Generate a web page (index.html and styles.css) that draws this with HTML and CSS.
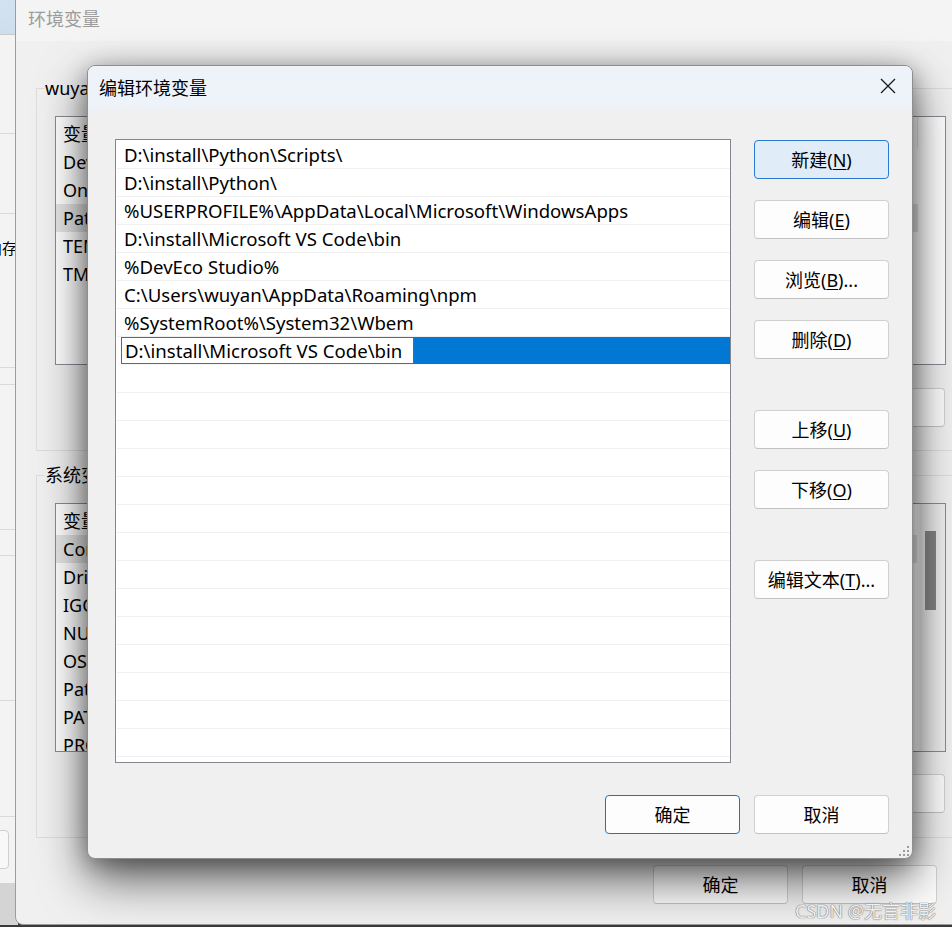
FILE: index.html
```html
<!DOCTYPE html>
<html lang="zh-CN">
<head>
<meta charset="utf-8">
<title>编辑环境变量</title>
<link rel="stylesheet" href="styles.css">
</head>
<body>
<div class="desktop">

  <section class="win far">
    <div class="far-top"></div>
    <div class="far-sec h98"></div>
    <div class="far-sec h79"></div>
    <div class="far-sec h153"><span class="far-label">内存</span></div>
    <div class="far-sec h16"></div>
    <div class="far-sec h144"></div>
    <div class="far-sec h25"></div>
    <div class="far-sec h144"></div>
    <div class="far-sec h115"></div>
    <div class="far-foot"><span class="far-btn"></span></div>
    <div class="far-rest"></div>
  </section>

  <section class="win env">
    <header class="env-title">环境变量</header>
    <div class="env-body">
      <div class="group g-user">
        <span class="group-label">wuyan 的用户变量(<u>U</u>)</span>
        <div class="lv">
          <div class="lv-main">
            <div class="lv-head"><span class="col-name">变量</span><span class="col-val">值</span></div>
            <div class="lv-row"><span class="col-name">DevEco Studio</span><span class="col-val">D:\install\DevEco Studio\bin;</span></div>
            <div class="lv-row"><span class="col-name">OneDrive</span><span class="col-val">C:\Users\wuyan\OneDrive</span></div>
            <div class="lv-row sel"><span class="col-name">Path</span><span class="col-val">D:\install\Python\Scripts\;D:\install\Python\;...</span></div>
            <div class="lv-row"><span class="col-name">TEMP</span><span class="col-val">%USERPROFILE%\AppData\Local\Temp</span></div>
            <div class="lv-row"><span class="col-name">TMP</span><span class="col-val">%USERPROFILE%\AppData\Local\Temp</span></div>
          </div>
        </div>
        <div class="btn-row">
          <button class="btn">新建(<u>N</u>)...</button>
          <button class="btn">编辑(<u>E</u>)...</button>
          <button class="btn">删除(<u>D</u>)</button>
        </div>
      </div>

      <div class="group g-sys">
        <span class="group-label">系统变量(<u>S</u>)</span>
        <div class="lv">
          <div class="lv-main">
            <div class="lv-head"><span class="col-name">变量</span><span class="col-val">值</span></div>
            <div class="lv-row sel"><span class="col-name">ComSpec</span><span class="col-val">C:\Windows\system32\cmd.exe</span></div>
            <div class="lv-row"><span class="col-name">DriverData</span><span class="col-val">C:\Windows\System32\Drivers\DriverData</span></div>
            <div class="lv-row"><span class="col-name">IGCCSVC_DB</span><span class="col-val">AQAAANCMnd8BFdERjHoAwE...</span></div>
            <div class="lv-row"><span class="col-name">NUMBER_OF_PROCESSORS</span><span class="col-val">16</span></div>
            <div class="lv-row"><span class="col-name">OS</span><span class="col-val">Windows_NT</span></div>
            <div class="lv-row"><span class="col-name">Path</span><span class="col-val">C:\Windows\system32;C:\Windows;...</span></div>
            <div class="lv-row"><span class="col-name">PATHEXT</span><span class="col-val">.COM;.EXE;.BAT;.CMD;.VBS;.VBE;.JS</span></div>
            <div class="lv-row"><span class="col-name">PROCESSOR_ARCHITECTURE</span><span class="col-val">AMD64</span></div>
          </div>
          <div class="vscroll"><span class="vthumb"></span></div>
        </div>
        <div class="btn-row">
          <button class="btn">新建(<u>W</u>)...</button>
          <button class="btn">编辑(<u>I</u>)...</button>
          <button class="btn">删除(<u>L</u>)</button>
        </div>
      </div>

      <div class="env-foot">
        <button class="btn">确定</button>
        <button class="btn">取消</button>
      </div>
    </div>
  </section>

  <section class="win dlg">
    <header class="dlg-title">
      <span class="dlg-caption">编辑环境变量</span>
      <span class="dlg-close">
        <svg width="16" height="16" viewBox="0 0 16 16" aria-hidden="true"><path d="M1 1 L15 15 M15 1 L1 15" stroke="#1a1a1a" stroke-width="1.3" fill="none"/></svg>
      </span>
    </header>
    <div class="dlg-body">
      <div class="dlg-main">
        <div class="plist">
          <div class="prow"><span class="ptext">D:\install\Python\Scripts\</span></div>
          <div class="prow"><span class="ptext">D:\install\Python\</span></div>
          <div class="prow"><span class="ptext">%USERPROFILE%\AppData\Local\Microsoft\WindowsApps</span></div>
          <div class="prow"><span class="ptext">D:\install\Microsoft VS Code\bin</span></div>
          <div class="prow"><span class="ptext">%DevEco Studio%</span></div>
          <div class="prow"><span class="ptext">C:\Users\wuyan\AppData\Roaming\npm</span></div>
          <div class="prow"><span class="ptext">%SystemRoot%\System32\Wbem</span></div>
          <div class="prow editing"><span class="pedit">D:\install\Microsoft VS Code\bin</span><span class="pfill"></span></div>
          <div class="prow"></div><div class="prow"></div><div class="prow"></div><div class="prow"></div>
          <div class="prow"></div><div class="prow"></div><div class="prow"></div><div class="prow"></div>
          <div class="prow"></div><div class="prow"></div><div class="prow"></div><div class="prow"></div>
          <div class="prow"></div><div class="prow"></div>
        </div>
        <div class="side">
          <button class="btn default">新建(<u>N</u>)</button>
          <button class="btn">编辑(<u>E</u>)</button>
          <button class="btn">浏览(<u>B</u>)...</button>
          <button class="btn">删除(<u>D</u>)</button>
          <button class="btn gap">上移(<u>U</u>)</button>
          <button class="btn">下移(<u>O</u>)</button>
          <button class="btn gap">编辑文本(<u>T</u>)...</button>
        </div>
      </div>
      <div class="dlg-foot">
        <button class="btn primary">确定</button>
        <button class="btn">取消</button>
      </div>
    </div>
    <svg class="grip" width="10" height="10" viewBox="0 0 10 10" aria-hidden="true">
      <rect x="8" y="0" width="2" height="2" fill="#9d9d9d"/>
      <rect x="4" y="4" width="2" height="2" fill="#9d9d9d"/>
      <rect x="8" y="4" width="2" height="2" fill="#9d9d9d"/>
      <rect x="0" y="8" width="2" height="2" fill="#9d9d9d"/>
      <rect x="4" y="8" width="2" height="2" fill="#9d9d9d"/>
      <rect x="8" y="8" width="2" height="2" fill="#9d9d9d"/>
    </svg>
  </section>

  <div class="watermark">CSDN @无言非影</div>
</div>
</body>
</html>
```

FILE: styles.css
```css
* { box-sizing: border-box; }
html, body { margin: 0; padding: 0; }
body {
  width: 952px;
  height: 927px;
  overflow: hidden;
  background: #3a3a3a;
  font-family: "Noto Sans", "Noto Sans CJK SC", sans-serif;
  font-size: 18px;
  color: #000;
}
u { text-decoration: underline; text-underline-offset: 2px; text-decoration-thickness: 1px; }

.desktop { position: relative; width: 952px; height: 927px; overflow: hidden; }
.win { position: absolute; }

/* ---------- far background window (left strip) ---------- */
.far {
  left: -600px; top: 0;
  width: 618px; height: 925px;
  background: #f3f3f3;
  display: flex; flex-direction: column;
}
.far-top { height: 35px; background: linear-gradient(#d3e2f0, #cfdeec); border-bottom: 1px solid #c9c9c9; flex: none; }
.far-sec { border-bottom: 1px solid #d9d9d9; flex: none; position: relative; }
.h98 { height: 99px; }
.h79 { height: 80px; }
.h153 { height: 154px; }
.h16 { height: 17px; }
.h144 { height: 145px; }
.h25 { height: 26px; }
.h115 { height: 116px; }
.far-label { display: block; text-align: right; margin-top: 24px; font-size: 15px; line-height: 20px; margin-right: 1px; font-family: "Noto Sans CJK SC", sans-serif; }
.far-foot { height: 66px; padding-top: 13px; display: flex; justify-content: flex-end; padding-right: 9px; flex: none; }
.far-btn { width: 120px; height: 39px; border: 1px solid #cfcfcf; border-radius: 4px; background: #f8f8f8; }
.far-rest { flex: 1; background: #d4d4d4; }

/* ---------- 环境变量 window ---------- */
.env {
  left: 15px; top: -8px;
  width: 972px; height: 933px;
  background: #f0f0f0;
  border: 1px solid #9c9c9c;
  border-radius: 8px;
  overflow: hidden;
  display: flex; flex-direction: column;
}
.env-title {
  height: 48px; flex: none;
  padding: 13px 0 0 12px;
  line-height: 24px;
  color: #9b9b9b;
  background: #f4f4f4;
  font-family: "Noto Sans CJK SC", sans-serif;
}
.env-body { padding: 0 49px 0 20px; display: flex; flex-direction: column; }
.group {
  position: relative;
  width: 930px;
  border: 1px solid #dcdcdc;
  padding: 27px 19px 23px 18px;
}
.g-user { margin-top: 47px; }
.g-sys { margin-top: 24px; padding-bottom: 24px; }
.group-label {
  position: absolute; left: 7px; top: -13px;
  padding: 0 1px;
  background: #f0f0f0;
  line-height: 24px;
  white-space: nowrap;
}
.lv {
  height: 249px;
  border: 1px solid #8a8a93;
  background: #fff;
  display: flex;
  overflow: hidden;
}
.lv-main { flex: 1; overflow: hidden; }
.lv-head, .lv-row { display: flex; width: 862px; white-space: nowrap; }
.lv-head { height: 31px; align-items: center; }
.lv-row { height: 28px; align-items: center; }
.lv-row.sel { background: #e5e5e5; }
.col-name { width: 240px; padding-left: 7px; overflow: hidden; flex: none; }
.col-val { width: 622px; padding-left: 7px; overflow: hidden; flex: none; }
.lv-head .col-val { border-right: 1px solid #e5e5e5; height: 31px; line-height: 31px; }
.vscroll {
  width: 28px; flex: none;
  background: linear-gradient(90deg, #f4f4f4 0, #f4f4f4 2px, #e3e3e3 3px, #efefef 100%);
  padding: 27px 0 0 8px;
}
.vthumb { display: block; width: 11px; height: 79px; background: #858585; }
.btn-row { margin-top: 23px; display: flex; justify-content: flex-end; gap: 14px; padding-right: 1px; }
.g-sys .btn-row { margin-top: 22px; }
.env-foot { margin-top: 27px; display: flex; justify-content: flex-end; gap: 14px; }

/* ---------- buttons ---------- */
.btn {
  width: 135px; height: 39px;
  margin: 0; padding: 0;
  border: 1px solid #d0d0d0;
  border-bottom-color: #c2c2c2;
  border-radius: 4px;
  background: #fdfdfd;
  font-family: "Noto Sans", "Noto Sans CJK SC", sans-serif;
  font-size: 18px;
  color: #000;
  line-height: 24px;
  flex: none;
}
.btn.default { background: #e0ecf8; border-color: #2a7bd0; }
.btn.primary { border-color: #1a73d0; }

/* ---------- 编辑环境变量 dialog ---------- */
.dlg {
  left: 87px; top: 65px;
  width: 826px; height: 794px;
  background: #f0f0f0;
  border: 1px solid #8e8e8e;
  border-radius: 8px;
  overflow: hidden;
  display: flex; flex-direction: column;
  box-shadow: 0 20px 48px rgba(0, 0, 0, 0.62), 0 4px 22px rgba(0, 0, 0, 0.3);
}
.dlg-title {
  height: 43px; flex: none;
  background: #eef3f9;
  display: flex; align-items: center; justify-content: space-between;
  padding-left: 11px;
}
.dlg-caption { font-family: "Noto Sans CJK SC", sans-serif; line-height: 24px; padding-bottom: 2px; }
.dlg-close { width: 48px; height: 43px; display: flex; align-items: center; justify-content: center; padding-bottom: 3px; }
.dlg-body { flex: 1; padding: 30px 23px 24px 27px; display: flex; flex-direction: column; }
.dlg-main { display: flex; gap: 23px; }
.plist {
  width: 616px; height: 624px;
  background: #fff;
  border: 1px solid #85858f;
  padding-top: 1px;
  overflow: hidden;
}
.prow {
  height: 28px;
  margin-left: 1px;
  border-bottom: 1px solid #f0f0f0;
  display: flex; align-items: center;
  white-space: nowrap;
}
.ptext { padding-left: 7px; font-size: 18.6px; }
.prow.editing { border-bottom-color: #f7f7f7; align-items: stretch; }
.pedit {
  margin-left: 4px;
  width: 293px;
  border: 1px solid #666;
  background: #fff;
  padding-left: 3px;
  font-size: 18.6px;
  line-height: 25px;
}
.pfill { flex: none; width: 316px; background: #0078d4; }
.side { display: flex; flex-direction: column; gap: 21px; padding-top: 1px; }
.side .gap { margin-top: 30px; }
.dlg-foot { margin-top: 32px; display: flex; justify-content: flex-end; gap: 14px; }
.grip { position: absolute; right: 3px; bottom: 2px; }

/* ---------- watermark ---------- */
.watermark {
  position: absolute; right: 16px; top: 897px;
  font-family: "Noto Sans", "Noto Sans CJK SC", sans-serif;
  font-size: 18px;
  color: rgba(255, 255, 255, 0.92);
  text-shadow: 0 0 1px #666, 0 0 1px #666;
  white-space: nowrap;
}
```
